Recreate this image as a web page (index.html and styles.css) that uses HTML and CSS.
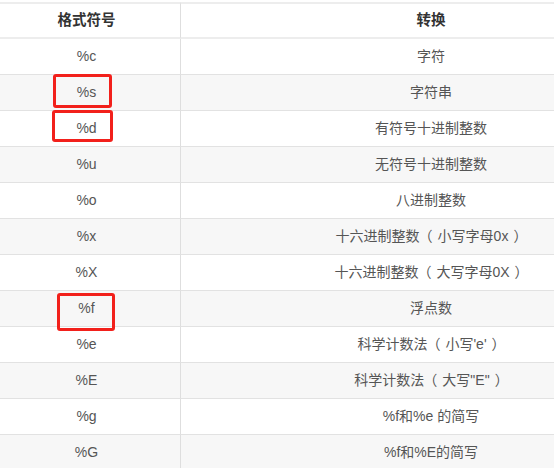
FILE: index.html
```html
<!DOCTYPE html>
<html lang="zh">
<head>
<meta charset="utf-8">
<link rel="stylesheet" href="styles.css">
</head>
<body>
<div class="wrap">
  <table class="fmt">
    <colgroup><col class="c1"><col class="c2"></colgroup>
    <thead>
      <tr><th>格式符号</th><th>转换</th></tr>
    </thead>
    <tbody>
      <tr><td>%c</td><td>字符</td></tr>
      <tr><td>%s</td><td>字符串</td></tr>
      <tr><td>%d</td><td>有符号十进制整数</td></tr>
      <tr><td>%u</td><td>无符号十进制整数</td></tr>
      <tr><td>%o</td><td>八进制整数</td></tr>
      <tr><td>%x</td><td>十六进制整数<span class="po">（</span>小写字母0x<span class="pc">）</span></td></tr>
      <tr><td>%X</td><td>十六进制整数<span class="po">（</span>大写字母0X<span class="pc">）</span></td></tr>
      <tr><td>%f</td><td>浮点数</td></tr>
      <tr><td>%e</td><td>科学计数法<span class="po">（</span>小写'e'<span class="pc">）</span></td></tr>
      <tr><td>%E</td><td>科学计数法<span class="po">（</span>大写"E"<span class="pc">）</span></td></tr>
      <tr><td>%g</td><td>%f和%e 的简写</td></tr>
      <tr><td>%G</td><td>%f和%E的简写</td></tr>
    </tbody>
  </table>
  <span class="mark mark-s"></span>
  <span class="mark mark-d"></span>
  <span class="mark mark-f"></span>
</div>
</body>
</html>
```

FILE: styles.css
```css
html, body {
  margin: 0;
  padding: 0;
  background: #fff;
  overflow: hidden;
}

.wrap {
  position: relative;
  padding-top: 2px;
}

.fmt {
  border-collapse: separate;
  border-spacing: 0;
  table-layout: fixed;
  width: 688px;
  margin-left: -7px;
  font-family: "Liberation Sans", "Noto Sans CJK SC", sans-serif;
  font-size: 14px;
}

.c1 { width: 188px; }
.c2 { width: 500px; }

.fmt th,
.fmt td {
  padding: 0;
  text-align: center;
  white-space: nowrap;
}

.fmt th {
  line-height: 33px;
  font-size: 14.5px;
  color: #333;
  font-weight: 700;
  border-top: 2px solid #ededed;
  border-bottom: 2px solid #ededed;
}

.fmt td {
  line-height: 35px;
  color: #555;
  border-bottom: 1px solid #e2e2e2;
}

.fmt th:first-child,
.fmt td:first-child {
  border-right: 1px solid #dedede;
}

.fmt tbody tr:nth-child(even) td {
  background: #f7f7f7;
}

.po { margin-left: -1px; margin-right: 5px; }
.pc { margin-left: 5px; margin-right: -1px; }

.mark {
  position: absolute;
  box-sizing: border-box;
  border: 3px solid #f2201b;
  border-radius: 3px;
}

.mark-s { left: 53px; top: 74px; width: 59px; height: 34px; }
.mark-d { left: 52px; top: 110px; width: 61px; height: 32px; }
.mark-f { left: 57px; top: 293px; width: 58px; height: 38px; }
```
